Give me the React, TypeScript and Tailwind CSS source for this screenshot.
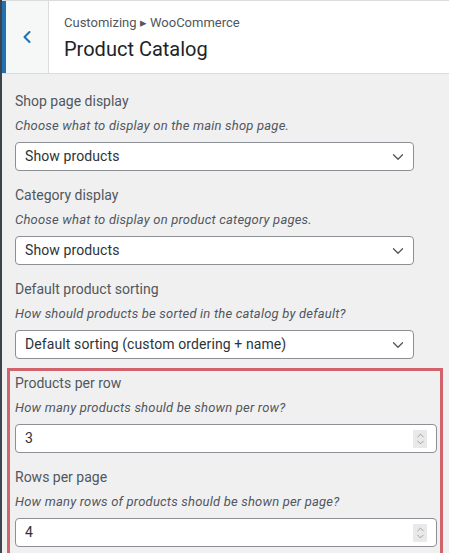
import { ChevronLeft, ChevronDown, ChevronUp } from 'lucide-react';

const SELECTS = [
  {
    label: 'Shop page display',
    help: 'Choose what to display on the main shop page.',
    value: 'Show products',
  },
  {
    label: 'Category display',
    help: 'Choose what to display on product category pages.',
    value: 'Show products',
  },
  {
    label: 'Default product sorting',
    help: 'How should products be sorted in the catalog by default?',
    value: 'Default sorting (custom ordering + name)',
  },
];

const NUMBERS = [
  {
    label: 'Products per row',
    help: 'How many products should be shown per row?',
    value: '3',
  },
  {
    label: 'Rows per page',
    help: 'How many rows of products should be shown per page?',
    value: '4',
  },
];

function FieldText({ label, help }: { label: string; help: string }) {
  return (
    <>
      <div className="text-[14px] leading-[20px] text-[#50575e]">{label}</div>
      <div className="mt-[6px] text-[13px] leading-[18px] italic tracking-[0.2px] text-[#50575e]">{help}</div>
    </>
  );
}

function SelectControl({ value }: { value: string }) {
  return (
    <div className="mt-[7px] flex h-[29px] w-[399px] items-center justify-between rounded-[4px] border border-[#8c8f94] bg-white pl-[9px] pr-[6px] text-[14px] tracking-[0.1px] text-[#2c3338]">
      <span>{value}</span>
      <ChevronDown size={18} strokeWidth={1.75} className="text-[#50575e]" />
    </div>
  );
}

function NumberControl({ value }: { value: string }) {
  return (
    <div className="mt-[7px] flex h-[29px] w-[422px] items-center justify-between rounded-[4px] border border-[#8c8f94] bg-white pl-[9px] pr-[9px] text-[14px] text-[#2c3338]">
      <span>{value}</span>
      <div className="flex h-[18px] w-[14px] flex-col items-center justify-center bg-[#e9e9ea] text-[#8c8f94]">
        <ChevronUp size={11} strokeWidth={1.75} className="-mb-[2px]" />
        <ChevronDown size={11} strokeWidth={1.75} className="-mt-[2px]" />
      </div>
    </div>
  );
}

export default function App() {
  return (
    <div
      className="flex h-[553px] w-[449px] overflow-hidden bg-[#f0f0f1]"
      style={{ fontFamily: 'Roboto, "Noto Sans", sans-serif' }}
    >
      <div className="w-[2px] shrink-0 bg-[#3c434a]" />
      <div className="flex min-w-0 flex-1 flex-col">
        {/* Header */}
        <div className="flex h-[74px] shrink-0 border-y border-[#dcdcde] bg-white">
          <div className="flex w-[47px] shrink-0 items-center justify-center border-r border-l-4 border-r-[#dcdcde] border-l-[#2271b1] bg-[#f6f7f7] text-[#2271b1]">
            <ChevronLeft size={20} strokeWidth={2.5} />
          </div>
          <div className="flex flex-col pl-[15px] pt-[13px]">
            <div className="text-[13px] leading-[18px] text-[#50575e]">Customizing ▸ WooCommerce</div>
            <div className="mt-[5px] text-[20px] leading-[24px] text-[#1d2327]">Product Catalog</div>
          </div>
        </div>

        {/* Settings */}
        <div className="flex flex-col pl-[13px] pt-[17px]">
          {SELECTS.map((f) => (
            <div key={f.label} className="mb-[14px]">
              <FieldText label={f.label} help={f.help} />
              <SelectControl value={f.value} />
            </div>
          ))}
        </div>

        <div className="-mt-[5px] ml-[5px] w-[436px] border-[3px] border-[#d0636b] pl-[5px] pt-[2px]">
          {NUMBERS.map((f) => (
            <div key={f.label} className="mb-[14px]">
              <FieldText label={f.label} help={f.help} />
              <NumberControl value={f.value} />
            </div>
          ))}
        </div>
      </div>
    </div>
  );
}
